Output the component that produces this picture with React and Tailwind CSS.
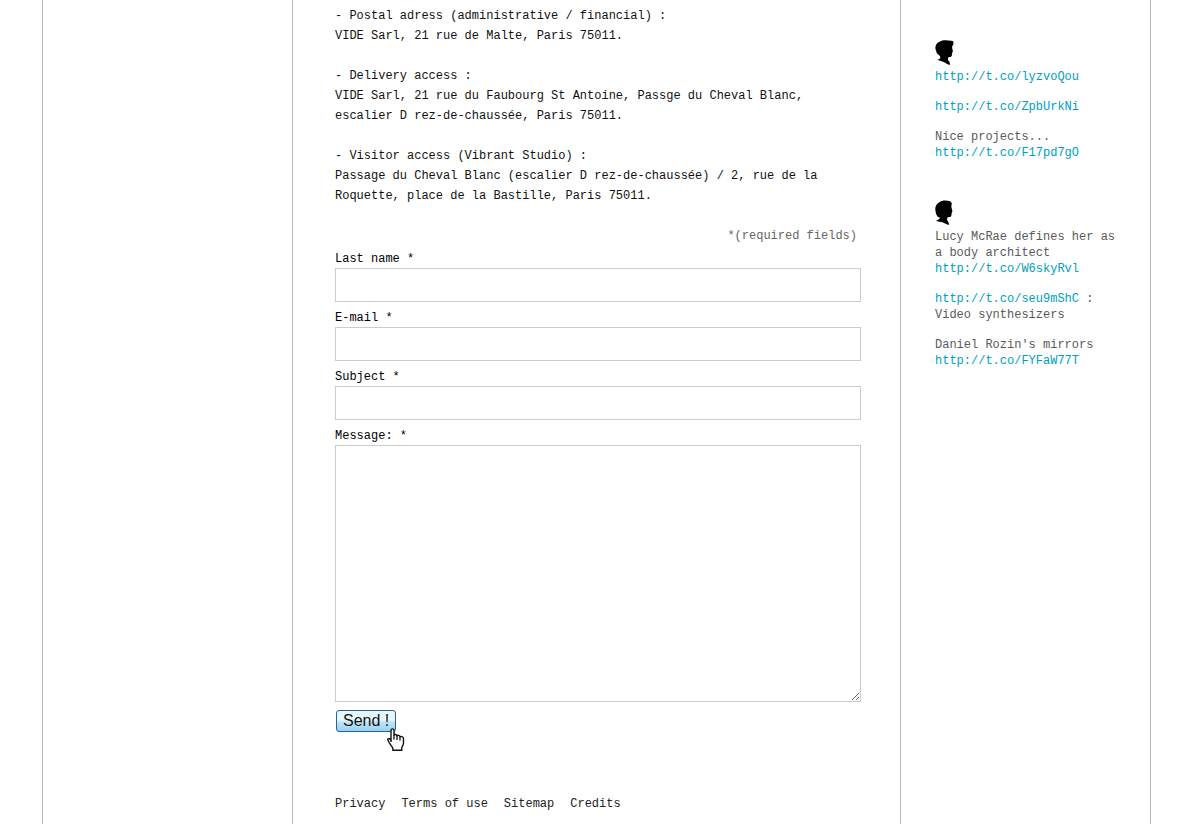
const FOOTER_LINKS = ['Privacy', 'Terms of use', 'Sitemap', 'Credits'];

const FIELDS = [
  { id: 'last-name', label: 'Last name *', type: 'text' },
  { id: 'email', label: 'E-mail *', type: 'email' },
  { id: 'subject', label: 'Subject *', type: 'text' },
];

function BoyHead() {
  return (
    <svg viewBox="0 0 20 25" className="block h-[25px] w-5" fill="#000" aria-hidden="true">
      <path d="M5 1.600C7 .3 10 .2 12.500 .5C14.500 .4 16.500 .4 18.300 1.300C18.600 3 18.700 4.700 17.500 5.800C16.900 7 17.200 8.500 17.500 9.700C18.200 11 18 11.700 17.200 12.200C17.500 13 17.200 13.700 16.900 14.300C17 15.500 16.700 16.700 15.500 17C14 17 13.200 17.300 13 18.400C12.700 19.600 13.300 20.500 14 21.300C14.900 22.500 15.100 23.600 14.800 24.900C12.500 24.500 11 23.200 9 22.200C7 21.300 4.500 21 2.500 19.500C4.500 19.200 5.500 18.400 5.300 17C5.100 15.800 4 15.300 3.300 14.500C1.500 13.500 1.500 12 1 10.500C.2 9 .2 7 .8 5.500C1.300 3.700 3 2.500 5 1.600Z" />
    </svg>
  );
}

function GirlHead() {
  return (
    <svg viewBox="0 0 20 25" className="block h-[25px] w-5" fill="#000" aria-hidden="true">
      <path d="M5 1.700C7.500 .3 11.500 .2 14.300 1C16 1.500 17 2.800 16.700 4.500C16.200 5.600 16.400 6.500 16.500 7.500C16.700 8.800 17.100 9.700 17.400 10.800C17.600 11.500 17 11.800 16.700 12.200C17 13 16.700 13.700 16.400 14.300C16.500 15.500 16.200 16.800 15 17C13.500 17 12.300 17.300 12.100 18.500C11.800 19.600 12.200 20.500 12.900 21.300C13.700 22.500 14 23.600 13.700 24.900C11.500 24.600 10 23.200 8 22.500C5.500 21.700 3 21.900 .8 20.800C3 20 4.800 19.200 5 17.500C3.300 17.300 2 16.500 1.700 15C.5 13.700 1 12 .4 10.500C-.2 7.500 1 3.600 5 1.700Z" />
    </svg>
  );
}

function TweetLink({ children }) {
  return (
    <a href={children} className="text-[#00a0c0]">
      {children}
    </a>
  );
}

function HandPointer() {
  return (
    <svg
      viewBox="0 0 18 23"
      className="pointer-events-none absolute left-[52px] top-[18px] h-[23px] w-[18px]"
      aria-hidden="true"
    >
      <path
        d="M4 2.500C4 .3 7 .3 7 2.500V7.300C7.300 6 9.800 6.200 10 7.900C10.500 6.800 12.800 7.200 13 8.800C13.600 8 16.500 8.300 16.500 10.700V15C16.500 17.400 14.800 18.300 14.800 20V22.200H5.800V20C4.500 17.800 3 16.300 2 14.200C1.500 13 .5 12 .7 11.200C1.400 10 3.300 10.900 4 12.200Z"
        fill="#fff"
        stroke="#111"
        strokeWidth="1.400"
        strokeLinejoin="round"
      />
      <path d="M4 12V14M7 7.300V11.500M10 8V12M13 9V12.500" fill="none" stroke="#111" strokeWidth="1.300" />
    </svg>
  );
}

export default function App() {
  return (
    <div className="min-h-screen bg-white pl-[42px] pr-[49px] font-['Liberation_Mono','Courier_New',monospace] text-xs text-black">
      <div className="flex min-h-screen border-x border-[#b8b8b8]">
        <div className="w-[249px] shrink-0" />

        <main className="min-w-0 flex-1 border-x border-[#b8b8b8] pb-3 pl-[42px] pr-[39px] pt-[6px]">
          <div className="flex flex-col gap-5 leading-5 text-[#111]">
            <p>
              - Postal adress (administrative / financial) :<br />
              VIDE Sarl, 21 rue de Malte, Paris 75011.
            </p>
            <p>
              - Delivery access :<br />
              VIDE Sarl, 21 rue du Faubourg St Antoine, Passge du Cheval Blanc, escalier D
              rez-de-chaussée, Paris 75011.
            </p>
            <p>
              - Visitor access (Vibrant Studio) :<br />
              Passage du Cheval Blanc (escalier D rez-de-chaussée) / 2, rue de la Roquette, place de
              la Bastille, Paris 75011.
            </p>
          </div>

          <form className="mt-5" onSubmit={(event) => event.preventDefault()}>
            <p className="mb-1 pr-1 text-right leading-5 text-[#666]">*(required fields)</p>
            <div className="flex flex-col gap-[7px]">
              {FIELDS.map((field) => (
                <div key={field.id} className="flex flex-col">
                  <label htmlFor={field.id} className="leading-[18px]">
                    {field.label}
                  </label>
                  <input
                    id={field.id}
                    name={field.id}
                    type={field.type}
                    className="h-[34px] w-full border border-[#ccc] bg-white px-2"
                  />
                </div>
              ))}
              <div className="flex flex-col">
                <label htmlFor="message" className="leading-[18px]">
                  Message: *
                </label>
                <textarea
                  id="message"
                  name="message"
                  className="block h-[257px] w-full border border-[#ccc] bg-white p-2"
                />
              </div>
            </div>
            <div className="relative mt-2 w-fit pl-px">
              <button
                type="submit"
                className="flex h-[22px] items-center rounded-[3px] border border-[#2c628b] bg-linear-to-b from-[#e8f5fc] from-45% via-[#c0e5f9] via-55% to-[#98d1f0] px-[6px] font-['Liberation_Sans',Arial,sans-serif] text-base text-[#111]"
              >
                Send !
              </button>
              <HandPointer />
            </div>
          </form>

          <footer className="mt-[62px]">
            <nav className="flex flex-wrap gap-x-4 leading-5 text-[#222]">
              {FOOTER_LINKS.map((link) => (
                <a key={link} href="#">
                  {link}
                </a>
              ))}
            </nav>
          </footer>
        </main>

        <aside className="flex w-[249px] shrink-0 flex-col gap-[39px] pl-[34px] pr-7 pt-10 leading-4 text-[#5a5a5a]">
          <section className="flex flex-col gap-1">
            <BoyHead />
            <div className="flex flex-col gap-[14px]">
              <p>
                <TweetLink>http://t.co/lyzvoQou</TweetLink>
              </p>
              <p>
                <TweetLink>http://t.co/ZpbUrkNi</TweetLink>
              </p>
              <p>
                Nice projects...
                <br />
                <TweetLink>http://t.co/F17pd7gO</TweetLink>
              </p>
            </div>
          </section>

          <section className="flex flex-col gap-1">
            <GirlHead />
            <div className="flex flex-col gap-[14px]">
              <p>
                Lucy McRae defines her as a body architect
                <br />
                <TweetLink>http://t.co/W6skyRvl</TweetLink>
              </p>
              <p>
                <TweetLink>http://t.co/seu9mShC</TweetLink> :<br />
                Video synthesizers
              </p>
              <p>
                Daniel Rozin&apos;s mirrors
                <br />
                <TweetLink>http://t.co/FYFaW77T</TweetLink>
              </p>
            </div>
          </section>
        </aside>
      </div>
    </div>
  );
}
